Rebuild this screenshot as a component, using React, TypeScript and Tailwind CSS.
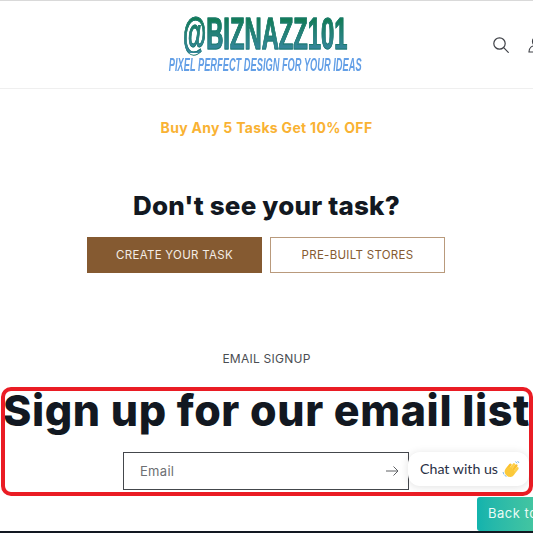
const sans = "font-['Inter','Liberation_Sans',sans-serif]";

function SearchIcon() {
  return (
    <svg width="16" height="16" viewBox="0 0 16 16" fill="none" stroke="#3f4147" strokeWidth="1.2">
      <circle cx="6.500" cy="6.500" r="5.700" />
      <path d="M10.700 10.700l4.600 4.600" strokeLinecap="round" />
    </svg>
  );
}

function UserIcon() {
  return (
    <svg width="16" height="16" viewBox="0 0 16 16" fill="none" stroke="#3f4147" strokeWidth="1.2">
      <circle cx="8" cy="4.500" r="3.500" />
      <path d="M1 15c0-4 3-6.500 7-6.500s7 2.500 7 6.500z" />
    </svg>
  );
}

function WaveEmoji() {
  return (
    <svg width="18" height="18" viewBox="0 0 18 18">
      <g transform="rotate(38 9 10)">
        <rect x="4" y="5" width="2.600" height="8" rx="1.300" fill="#fbc02d" />
        <rect x="6.600" y="2.500" width="2.600" height="10" rx="1.300" fill="#fdd04a" />
        <rect x="9.200" y="2" width="2.600" height="10" rx="1.300" fill="#fbc02d" />
        <rect x="11.800" y="3.500" width="2.500" height="9" rx="1.250" fill="#fdd04a" />
        <ellipse cx="9.200" cy="12.500" rx="5.200" ry="4.600" fill="#fbc93a" />
      </g>
      <path d="M13.500 1.500l1.500 1.800M15.500 1l1.500 2M1 12l1 2.500M2.800 15l1.500 1.800" stroke="#7db8e8" strokeWidth="1" fill="none" />
    </svg>
  );
}

export default function App() {
  return (
    <div className={`relative h-[533px] w-[533px] overflow-hidden bg-white ${sans}`}>
      <header className="flex h-[89px] items-center justify-center border-t border-b border-t-[#d9d9d9] border-b-[#efefef] pr-[3px]">
        <div className="flex flex-col items-center">
          <div className="scale-x-[0.54] bg-gradient-to-b from-[#0b7a4a] to-[#3a87a6] bg-clip-text font-['Liberation_Sans',sans-serif] text-[44px] leading-[38px] font-bold whitespace-nowrap text-transparent [-webkit-text-stroke:1px_#1d7a70]">
            @BIZNAZZ101
          </div>
          <div className="mt-[3px] scale-x-[0.515] font-['Liberation_Sans',sans-serif] text-[18px] leading-[18px] font-bold whitespace-nowrap text-[#639fe6] italic">
            PIXEL PERFECT DESIGN FOR YOUR IDEAS
          </div>
        </div>
      </header>
      <div className="absolute top-[37px] left-[493px] flex gap-[19px]">
        <SearchIcon />
        <UserIcon />
      </div>

      <p className="mt-[29px] text-center text-[14px] leading-[20px] font-bold tracking-[0.300px] text-[#f9b233]">
        Buy Any 5 Tasks Get 10% OFF
      </p>

      <h2 className="mt-[50px] text-center text-[26px] leading-[36px] font-extrabold tracking-[0.200px] text-[#121821]">
        Don't see your task?
      </h2>

      <div className="mt-[13px] flex gap-[8px] pl-[87px]">
        <div className="flex h-[36px] w-[175px] items-center justify-center bg-[#855a31] pt-[2px] text-[11.500px] tracking-[0.300px] text-[#f3ece5]">
          CREATE YOUR TASK
        </div>
        <div className="flex h-[36px] w-[175px] items-center justify-center border border-[#b99a7c] pt-[2px] text-[11.500px] tracking-[0.300px] text-[#855a31]">
          PRE-BUILT STORES
        </div>
      </div>

      <p className="mt-[76px] text-center text-[12px] leading-[20px] tracking-[0.250px] text-[#4a4d52]">
        EMAIL SIGNUP
      </p>

      <h2 className="mt-[16px] text-center text-[43px] leading-[50px] font-extrabold tracking-[0.600px] whitespace-nowrap text-[#121821]">
        Sign up for our email list
      </h2>

      <div className="mt-[17px] ml-[123px] flex h-[38px] w-[286px] items-center justify-between border border-[#44474c] pr-[9px] pl-[16px]">
        <span className="pt-[1px] text-[13px] tracking-[0.300px] text-[#6d6f73]">Email</span>
        <svg width="14" height="12" viewBox="0 0 14 12" fill="none" stroke="#5f6165" strokeWidth="1">
          <path d="M1 6h12M8.500 1.500L13 6l-4.500 4.500" />
        </svg>
      </div>

      {/* annotation box drawn over the signup section */}
      <div className="pointer-events-none absolute top-[387px] left-[1px] h-[109px] w-[532px] rounded-[10px] border-[4px] border-[#ea1c24]" />

      <div className="absolute top-[452px] left-[408px] flex h-[34px] w-[121px] items-center gap-[4px] rounded-[12px] bg-white pl-[12px] font-['Lato',sans-serif] text-[14.200px] text-[#2a3045] shadow-[0_1px_8px_rgba(0,0,0,0.12)]">
        <span className="whitespace-nowrap">Chat with us</span>
        <WaveEmoji />
      </div>

      <div className="absolute top-[497px] left-[477px] flex h-[34px] w-[90px] items-center rounded-[3px] bg-gradient-to-r from-[#12b3ad] to-[#56cf98] pl-[11px] text-[13px] tracking-[0.500px] whitespace-nowrap text-[#e9fbf6]">
        Back to top
      </div>

      <div className="absolute bottom-0 left-0 h-[2px] w-full bg-[#121821]" />
    </div>
  );
}
